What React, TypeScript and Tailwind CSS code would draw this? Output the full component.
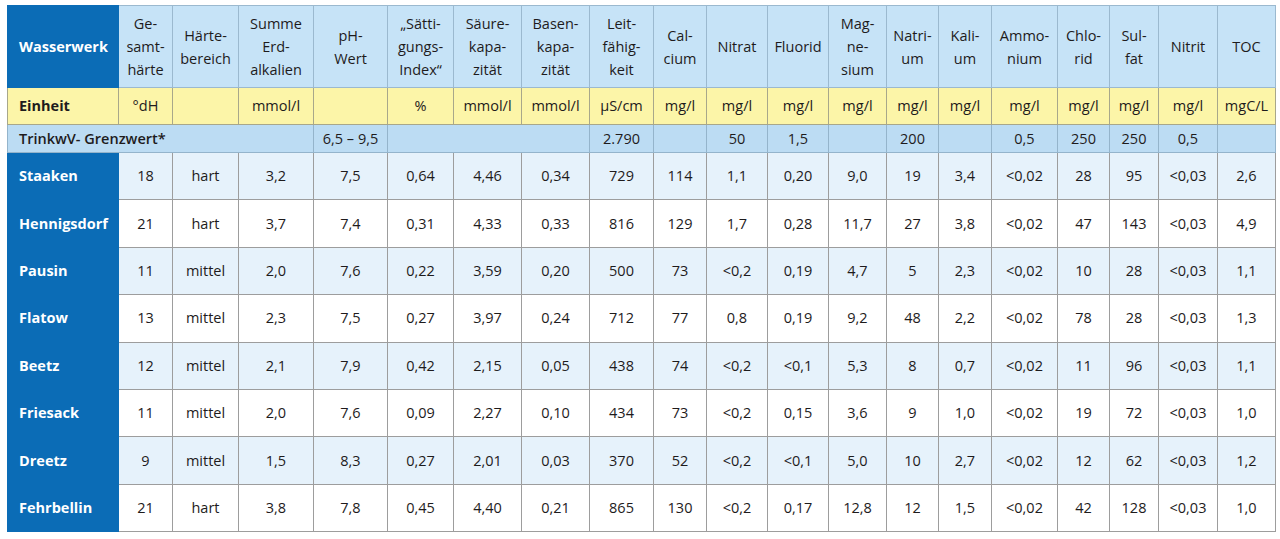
import React from 'react'

const WIDTHS = [111, 54, 66, 75, 74, 66, 68, 68, 64, 53, 61, 61, 58, 52, 53, 66, 52, 49, 59, 58]

const HEADERS: string[][] = [
  ['Ge-', 'samt-', 'härte'],
  ['Härte-', 'bereich'],
  ['Summe', 'Erd-', 'alkalien'],
  ['pH-', 'Wert'],
  ['„Sätti-', 'gungs-', 'Index“'],
  ['Säure-', 'kapa-', 'zität'],
  ['Basen-', 'kapa-', 'zität'],
  ['Leit-', 'fähig-', 'keit'],
  ['Cal-', 'cium'],
  ['Nitrat'],
  ['Fluorid'],
  ['Mag-', 'ne-', 'sium'],
  ['Natri-', 'um'],
  ['Kali-', 'um'],
  ['Ammo-', 'nium'],
  ['Chlo-', 'rid'],
  ['Sul-', 'fat'],
  ['Nitrit'],
  ['TOC'],
]

const UNITS = ['°dH', '', 'mmol/l', '', '%', 'mmol/l', 'mmol/l', 'µS/cm', 'mg/l', 'mg/l', 'mg/l', 'mg/l', 'mg/l', 'mg/l', 'mg/l', 'mg/l', 'mg/l', 'mg/l', 'mgC/L']

// Grenzwert row after the 4-col label: [value, colspan]
const LIMITS: [string, number][] = [
  ['6,5 – 9,5', 1],
  ['', 3],
  ['2.790', 1],
  ['', 1],
  ['50', 1],
  ['1,5', 1],
  ['', 1],
  ['200', 1],
  ['', 1],
  ['0,5', 1],
  ['250', 1],
  ['250', 1],
  ['0,5', 1],
  ['', 1],
]

const ROWS: [string, string[]][] = [
  ['Staaken', ['18', 'hart', '3,2', '7,5', '0,64', '4,46', '0,34', '729', '114', '1,1', '0,20', '9,0', '19', '3,4', '<0,02', '28', '95', '<0,03', '2,6']],
  ['Hennigsdorf', ['21', 'hart', '3,7', '7,4', '0,31', '4,33', '0,33', '816', '129', '1,7', '0,28', '11,7', '27', '3,8', '<0,02', '47', '143', '<0,03', '4,9']],
  ['Pausin', ['11', 'mittel', '2,0', '7,6', '0,22', '3,59', '0,20', '500', '73', '<0,2', '0,19', '4,7', '5', '2,3', '<0,02', '10', '28', '<0,03', '1,1']],
  ['Flatow', ['13', 'mittel', '2,3', '7,5', '0,27', '3,97', '0,24', '712', '77', '0,8', '0,19', '9,2', '48', '2,2', '<0,02', '78', '28', '<0,03', '1,3']],
  ['Beetz', ['12', 'mittel', '2,1', '7,9', '0,42', '2,15', '0,05', '438', '74', '<0,2', '<0,1', '5,3', '8', '0,7', '<0,02', '11', '96', '<0,03', '1,1']],
  ['Friesack', ['11', 'mittel', '2,0', '7,6', '0,09', '2,27', '0,10', '434', '73', '<0,2', '0,15', '3,6', '9', '1,0', '<0,02', '19', '72', '<0,03', '1,0']],
  ['Dreetz', ['9', 'mittel', '1,5', '8,3', '0,27', '2,01', '0,03', '370', '52', '<0,2', '<0,1', '5,0', '10', '2,7', '<0,02', '12', '62', '<0,03', '1,2']],
  ['Fehrbellin', ['21', 'hart', '3,8', '7,8', '0,45', '4,40', '0,21', '865', '130', '<0,2', '0,17', '12,8', '12', '1,5', '<0,02', '42', '128', '<0,03', '1,0']],
]

export default function App() {
  return (
    <div className="min-h-[539px] bg-white pl-[7px] pt-[5px] font-['Open_Sans',sans-serif] text-[14.5px] text-[#1e1b1c]">
      <table className="table-fixed border-collapse" style={{ width: 1268 }}>
        <colgroup>
          {WIDTHS.map((w, i) => (
            <col key={i} style={{ width: w }} />
          ))}
        </colgroup>
        <tbody>
          {/* Header */}
          <tr className="h-[82px]">
            <th className="border border-[#0b6cb6] bg-[#0b6cb6] pl-[11px] text-left font-bold text-white">
              Wasserwerk
            </th>
            {HEADERS.map((lines, i) => (
              <th key={i} className="border border-[#9bb9cf] bg-[#c6e3f7] px-0 text-center align-middle font-normal leading-[23px]">
                {lines.map((l, j) => (
                  <div key={j}>{l}</div>
                ))}
              </th>
            ))}
          </tr>

          {/* Units */}
          <tr className="h-[37px]">
            <td className="border border-[#a8a78a] bg-[#fcf5a8] pl-[11px] font-bold">Einheit</td>
            {UNITS.map((u, i) => (
              <td key={i} className="border border-[#a8a78a] bg-[#fcf5a8] text-center">
                {u}
              </td>
            ))}
          </tr>

          {/* Limits */}
          <tr className="h-[28px]">
            <td colSpan={4} className="border border-[#94b4cb] bg-[#bcdcf3] pl-[11px] font-semibold">
              TrinkwV- Grenzwert*
            </td>
            {LIMITS.map(([v, span], i) => (
              <td key={i} colSpan={span} className="border border-[#94b4cb] bg-[#bcdcf3] text-center">
                {v}
              </td>
            ))}
          </tr>

          {ROWS.map(([name, vals], r) => (
            <tr key={name} className="h-[47.4px]">
              <td className="border border-[#0b6cb6] bg-[#0b6cb6] pl-[11px] font-bold text-white">{name}</td>
              {vals.map((v, i) => (
                <td
                  key={i}
                  className={`border border-[#9d9d9d] text-center ${r % 2 === 0 ? 'bg-[#e6f2fb]' : 'bg-white'}`}
                >
                  {v}
                </td>
              ))}
            </tr>
          ))}
        </tbody>
      </table>
    </div>
  )
}
